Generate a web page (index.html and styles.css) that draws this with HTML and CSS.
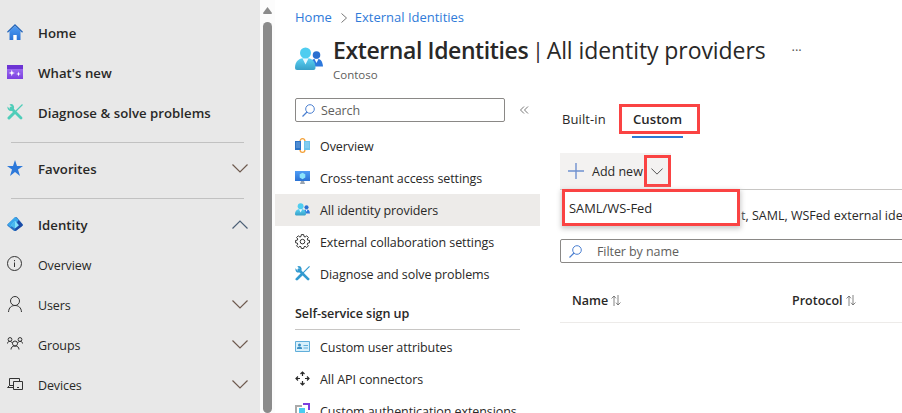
FILE: index.html
```
<!DOCTYPE html>
<html lang="en">
<head>
<meta charset="utf-8">
<title>External Identities | All identity providers</title>
<link rel="stylesheet" href="styles.css">
</head>
<body>
<svg width="0" height="0" class="defs" aria-hidden="true">
  <defs>
    <linearGradient id="blue" x2="0" y2="1"><stop stop-color="#4f9df5"/><stop offset="1" stop-color="#2a72d4"/></linearGradient>
    <linearGradient id="cyan" x2="0" y2="1"><stop stop-color="#5bd3f5"/><stop offset="1" stop-color="#38a0c8"/></linearGradient>
    <linearGradient id="purple" x2="0" y2="1"><stop stop-color="#a67af4"/><stop offset="1" stop-color="#7b3fe0"/></linearGradient>
    <symbol id="down" viewBox="0 0 16 9"><path d="M.5.5 8 8 15.500.5" fill="none" stroke="currentColor" stroke-width="1.200"/></symbol>
    <symbol id="people" viewBox="0 0 28 24">
      <circle cx="21.500" cy="8" r="3.800" fill="#2a6fd0"/><path d="M14 19.500c1-6 4-8 7.500-8s6 2 6.500 8z" fill="#2d78dc"/><path d="m19.500 12 2 4 2-4z" fill="#fff"/>
      <path d="M0 21c0-7 4-10 10.500-10S20.500 14 20.500 21q0 2-2 2H2q-2 0-2-2z" fill="url(#cyan)"/><circle cx="10.500" cy="6" r="5.500" fill="#4fcdf0"/><path d="m7.500 11.500 3 6 3-6z" fill="#e8f9ff"/>
    </symbol>
    <symbol id="tools" viewBox="0 0 16 16">
      <path d="m15.500.5-9 9" stroke="currentColor" stroke-width="1.200"/><path d="m7.500 8.500-5.500 5.500" stroke="currentColor" stroke-width="3" stroke-linecap="round"/>
      <path d="m4 4 10 10" stroke="currentColor" stroke-width="2.800" stroke-linecap="round"/><path d="M.4 2.400 3 5 5 3 2.400.4Q6-.8 7 2.500 7.500 6.500 4 7 .2 7 .4 2.400z" fill="currentColor"/>
    </symbol>
    <symbol id="search" viewBox="0 0 13 13"><circle cx="8" cy="5" r="4.300" fill="none" stroke="#4b7fd1"/><path d="M5 8 .5 12.500" stroke="#4b7fd1" stroke-width="1.200"/></symbol>
    <symbol id="sort" viewBox="0 0 10 11"><path d="M3 11V1M.5 3.500 3 1l2 2.300M7 0v10M5 7.700 7 10l2.500-2.500" fill="none" stroke="currentColor" stroke-width=".8"/></symbol>
  </defs>
</svg>
<div class="app">
  <nav class="rail">
    <a class="rail-row strong"><svg viewBox="0 0 16 16"><path d="M2.500 7 8 2l5.500 5v9h-4v-5h-3v5h-4z" fill="url(#blue)"/><path d="M.4 8.200 8 1l7.600 7.200" fill="none" stroke="#2767ba" stroke-width="1.300"/><path d="M6.500 11h3v5h-3z" fill="#fff"/></svg><span>Home</span></a>
    <a class="rail-row strong"><svg viewBox="0 0 16 16"><path fill="url(#purple)" d="M0 1h16v14H0z"/><path fill="#6c33d4" d="M0 1h16v4H0z"/><path fill="#fff" d="m4.800 5.800.8 2.400 2.400.8-2.400.8-.8 2.400-.8-2.400L1.600 9 4 8.200zm6.700 1.800.6 1.800 1.800.6-1.800.6-.6 1.800-.6-1.800-1.800-.6 1.800-.6z"/></svg><span>What's new</span></a>
    <a class="rail-row strong teal"><svg viewBox="0 0 16 16"><use href="#tools"/></svg><span>Diagnose &amp; solve problems</span></a>
    <hr>
    <a class="rail-row strong"><svg viewBox="0 0 16 16"><path fill="#2c78da" d="m8 0 2 6h6l-5 3.500 2 6.500-5-4-5 4 2-6.500L0 6h6z"/></svg><span>Favorites</span><svg class="chev"><use href="#down"/></svg></a>
    <hr>
    <a class="rail-row strong"><svg viewBox="0 0 16 16"><path fill="#2a6fc0" d="M8 1.500q1-.8 2 0l5.500 6.500q.8 1-.3 2L9.500 14.500q-1.500 1-3 0L.8 10q-1-.9-.2-1.800z"/><path fill="#3aa7ec" d="M8 1 .5 8.500l3 3L12 4z"/><path fill="#1b4aa5" d="m11.500 4 4.200 4.700q.3.800-.5 1.400L8.500 15 8 12z"/><path fill="#83e0fb" d="m8 4.800 4 4.500-4 3.200-4-3.200z"/><path fill="#4ab9ed" d="M8 4.800v7.700L4 9.300z"/></svg><span>Identity</span><svg class="chev up"><use href="#down"/></svg></a>
    <a class="rail-row"><svg viewBox="0 0 16 16" class="line"><circle cx="7.500" cy="7.500" r="7"/><path d="M7.500 6.500V11M7.500 4v1.200"/></svg><span>Overview</span></a>
    <a class="rail-row"><svg viewBox="0 0 16 16" class="line"><circle cx="8" cy="5" r="4.500"/><path d="M1.500 16C1.800 11.500 4.500 9.500 8 9.500s6.200 2 6.500 6.500"/></svg><span>Users</span><svg class="chev"><use href="#down"/></svg></a>
    <a class="rail-row"><svg viewBox="0 0 16 16" class="line"><circle cx="8" cy="7.500" r="2.500"/><path d="M4 13.500c0-2.300 1.500-3.500 4-3.500s4 1.200 4 3.500"/><circle cx="3" cy="3.500" r="1.900"/><circle cx="13" cy="3.500" r="1.900"/><path d="M.5 7.500c0-1.500 1-2.100 2.500-2.100 1.200 0 2 .8 2.500 2.100M15.500 7.500c0-1.500-1-2.100-2.500-2.100-1.200 0-2 .8-2.500 2.100"/></svg><span>Groups</span><svg class="chev"><use href="#down"/></svg></a>
    <a class="rail-row"><svg viewBox="0 0 16 16" class="line"><path d="M6.500 11.500H.5l2-2v-7h10v3M2.500 9.500h4M6.500 5.500h9v8h-9zM10 11.500h2"/></svg><span>Devices</span><svg class="chev"><use href="#down"/></svg></a>
  </nav>
  <div class="scroll"><svg viewBox="0 0 9 7" class="arrow"><path d="M4.500 0 9 6q0 1-1 1H1Q0 7 0 6z" fill="#8b8b8b"/></svg><div class="thumb"></div></div>
  <main class="page">
    <div class="crumbs"><span>Home</span><svg viewBox="0 0 6 10"><path d="m.5.500 5 4.500-5 4.500" fill="none" stroke="#777"/></svg><span>External Identities</span></div>
    <header class="head">
      <svg class="logo" viewBox="0 0 28 24"><use href="#people"/></svg>
      <div><h1><b>External Identities</b><i>|</i><span>All identity providers</span><em>···</em></h1><p>Contoso</p></div>
    </header>
    <div class="cols">
      <aside class="menu">
        <div class="searchrow"><div class="search"><svg><use href="#search"/></svg><span>Search</span></div><svg class="fold" viewBox="0 0 9 8"><path d="M4 .5.5 4 4 7.500M8 .5 4.500 4 8 7.500" fill="none" stroke="#666" stroke-width=".9"/></svg></div>
        <a class="item"><svg viewBox="0 0 15 15"><path d="M5 3.500C5-.3 10-.3 10 3.500M5 11.500c0 3.800 5 3.800 5 0" fill="none" stroke="#f4a23a" stroke-width="1.300"/><path fill="#2b72c5" d="M0 3h6v9H0z"/><path fill="#6cc4ec" d="M9 3h6v9H9z"/><path d="M1.500 5h3M1.500 7h3M1.500 9h3M10.500 5h3M10.500 7h3M10.500 9h3" stroke="#d2eafb" stroke-width=".9" stroke-dasharray="1"/></svg><span>Overview</span></a>
        <a class="item"><svg viewBox="0 0 15 15"><path fill="url(#blue)" d="M0 1h15v10H0z"/><path fill="#9aa5b1" d="M6 11h3l1 3H5z"/><path fill="#8be3fb" d="m7.500 2.800 2.800 1.500v3.200L7.500 9.200 4.700 7.500V4.300z"/></svg><span>Cross-tenant access settings</span></a>
        <a class="item on"><svg viewBox="0 0 28 24"><use href="#people"/></svg><span>All identity providers</span></a>
        <a class="item"><svg viewBox="0 0 15 15" class="line"><path d="M6.300.6h2.400l.3 1.900 1.100.5 1.600-1.200 1.700 1.700L12.200 5l.5 1.200 1.800.2v2.400l-1.800.3-.5 1.100 1.200 1.600-1.700 1.700-1.600-1.200-1.100.5-.3 1.700H6.300L6 12.800l-1.100-.5-1.600 1.200-1.700-1.700 1.200-1.600-.5-1.100-1.700-.3V6.400l1.700-.2L2.800 5 1.600 3.500l1.700-1.700L4.900 3 6 2.500z"/><circle cx="7.500" cy="7.600" r="2.300"/></svg><span>External collaboration settings</span></a>
        <a class="item azure"><svg viewBox="0 0 16 16"><use href="#tools"/></svg><span>Diagnose and solve problems</span></a>
        <h2>Self-service sign up</h2>
        <a class="item"><svg viewBox="0 0 15 15"><path fill="#d8f0fb" stroke="#61aeda" d="M.5 2.500h14v10H.5z"/><circle cx="4.500" cy="6" r="1.500" fill="#3d90c4"/><path fill="#3d90c4" d="M2 8.500q2.500-1.500 5 0V10H2z"/><path d="M8.500 6.500H13M8.500 9H13" stroke="#61aeda"/></svg><span>Custom user attributes</span></a>
        <a class="item"><svg viewBox="0 0 15 15"><path d="M7.500 1v4M7.500 10v4M1 7.500h4M10 7.500h4M5.500 3l2-2 2 2M5.500 12l2 2 2-2M3 5.500l-2 2 2 2M12 5.500l2 2-2 2" fill="none" stroke="#292929" stroke-width="1.200"/></svg><span>All API connectors</span></a>
        <a class="item"><svg viewBox="0 0 15 15"><path fill="#aaa" d="M0 2h7v2H2v9h9V9h2v6H0z"/><path fill="#48cdf0" d="M4 5h6v6H4z"/><path fill="#7b3fe0" d="M8 0h7v7h-2V2H8z"/></svg><span>Custom authentication extensions</span></a>
      </aside>
      <section class="content">
        <div class="tabs"><span class="tab">Built-in</span><span class="tabwrap"><span class="redtab"><b>Custom</b></span></span></div>
        <div class="cmd"><div class="add"><svg viewBox="0 0 16 16"><path d="M8 0v16M0 8h16" stroke="#6f91cf" stroke-width="1.400"/></svg><span class="label">Add new</span><span class="redchev"><svg><use href="#down" width="12" height="7"/></svg></span></div>
          <div class="menu-pop">SAML/WS-Fed</div></div>
        <p class="desc"><span>t, SAML, WSFed external identities</span></p>
        <div class="filter"><svg><use href="#search"/></svg><span>Filter by name</span></div>
        <div class="thead"><b class="th"><span>Name</span><svg><use href="#sort"/></svg></b><b class="th"><span>Protocol</span><svg><use href="#sort"/></svg></b></div>
      </section>
    </div>
  </main>
</div>
</body>
</html>
```
FILE: styles.css
```
* { box-sizing: border-box; }
body { margin: 0; height: 413px; overflow: hidden; background: #fff; color: #292827; font: 12.5px/20px "Open Sans", "Noto Sans", sans-serif; }
svg { display: block; flex: none; }
span, b { white-space: nowrap; }
.defs { position: absolute; }
.app { display: flex; height: 413px; overflow: hidden; }
.rail { width: 260px; flex: none; padding-top: 13px; background: #e8e8e8; }
.rail-row { display: flex; align-items: center; height: 40px; padding: 0 12px 0 7px; letter-spacing: -.12px; }
.rail-row > svg:first-child { width: 16px; height: 16px; margin: 0 15px 2px 0; }
.rail-row > .chev { width: 16px; height: 9px; margin: 0 0 2px auto; color: #6e5a4e; }
.rail-row > .up { transform: rotate(180deg); color: #4c6076; }
.rail-row > span, .item > span { padding-top: 2px; }
.strong { font-size: 13.2px; font-weight: 600; letter-spacing: 0.03px; }
.rail-row.strong > span { padding-top: 0; }
.rail hr { height: 1px; margin: 9px 16px 6px 11px; border: 0; background: #c1c1c1; }
.teal svg { color: #4fcdb9; }
.azure svg { color: #329ad0; }
.line { fill: none; stroke: #333; stroke-width: 1; }
.scroll { width: 15px; flex: none; padding: 7px 3px 0; background: #fcfcfc; }
.arrow { width: 9px; height: 7px; }
.thumb { width: 9px; height: 391px; margin-top: 8px; border-radius: 5px; background: #8b8b8b; }
.page { flex: 1; min-width: 0; }
.crumbs { display: flex; align-items: center; height: 34px; padding-left: 20px; color: #2f7bd9; font-size: 13px; }
.crumbs svg { width: 6px; height: 10px; margin: 2px 8px 0 9px; }
.head { display: flex; height: 64px; padding-left: 20px; }
.logo { width: 28px; height: 24px; margin: 13px 10px 0 0; }
h1 { display: flex; align-items: center; height: 32px; margin: 0; font-size: 23px; font-weight: 400; letter-spacing: -.08px; }
h1 b { font-weight: 600; letter-spacing: -.4px; }
h1 i { margin: 0 3px 0 4px; font-size: 21px; font-style: normal; }
h1 em { margin-left: 26px; font-size: 13px; font-style: normal; color: #555; }
.head p { margin: 0; font-size: 11.5px; line-height: 18px; color: #605e5c; }
.cols { display: flex; }
.menu { width: 265px; flex: none; letter-spacing: -.08px; }
.searchrow { display: flex; align-items: center; height: 24px; margin-bottom: 8px; padding-left: 20px; }
.search { display: flex; align-items: center; width: 210px; height: 24px; padding-left: 6px; border: 1px solid #8a8886; border-radius: 2px; color: #605e5c; }
.search svg, .filter svg { width: 13px; height: 13px; }
.search span { margin-left: 6px; padding-top: 2px; }
.fold { width: 9px; height: 8px; margin-left: 15px; }
.item { display: flex; align-items: center; height: 32px; padding-left: 20px; }
.item svg { width: 15px; height: 15px; margin-right: 10px; margin-bottom: 1px; }
.on { background: #edebe9; }
h2 { height: 40px; margin: 0 20px 1px; padding-top: 14px; border-bottom: 1px solid #c8c6c4; font-size: 12.6px; font-weight: 600; line-height: 20px; }
.content { flex: 1; min-width: 0; padding-left: 20px; }
.tabs { display: flex; height: 55px; padding-top: 6px; }
.tab { width: 57px; padding: 5px 0 0 2px; font-size: 13px; letter-spacing: .1px; }
.tabwrap { margin-left: 2px; height: 34px; background: linear-gradient(#2c78d4, #2c78d4) 13px 32px / 51px 2px no-repeat; }
.redtab { display: flex; align-items: center; width: 81px; height: 30px; padding: 0 0 0 11px; border: 3px solid #fa4343; }
.redtab b { font-size: 13.2px; font-weight: 600; }
.cmd { position: relative; height: 37px; border-bottom: 1px solid #c8c6c4; }
.add { display: flex; align-items: center; width: 111px; height: 36px; padding-left: 8px; background: #f3f2f1; }
.add > svg { width: 16px; height: 16px; margin-right: 8px; }
.add .label { width: 52px; padding-top: 2px; }
.redchev { display: flex; flex: none; width: 27px; height: 32px; padding: 10px 0 0 4px; border: 3px solid #fa4343; }
.redchev svg { width: 12px; height: 7px; color: #444; }
.menu-pop { position: absolute; left: 2px; top: 36px; width: 178px; height: 37px; padding: 6px 4px; border: 3px solid #fa4343; background: #fff; box-shadow: 0 2px 5px 1px #ccc; font-size: 12.900px; line-height: 20px; z-index: 1; }
.desc { height: 49px; margin: 0; padding: 16px 0 0 181px; overflow: hidden; }
.filter { display: flex; align-items: center; height: 24px; margin-right: -4px; padding-left: 8px; border: 1px solid #8a8886; border-radius: 2px; color: #605e5c; }
.filter span { margin-left: 15px; padding-top: 2px; letter-spacing: -.08px; }
.thead { display: flex; height: 60px; padding: 18px 0 0 12px; border-bottom: 1px solid #edebe9; }
.th { display: flex; flex: none; align-items: center; width: 220px; height: 41px; padding-bottom: 3px; font-weight: 600; }
.th span { padding-top: 1px; }
.th svg { width: 10px; height: 11px; margin-left: 3px; color: #666; }
```
